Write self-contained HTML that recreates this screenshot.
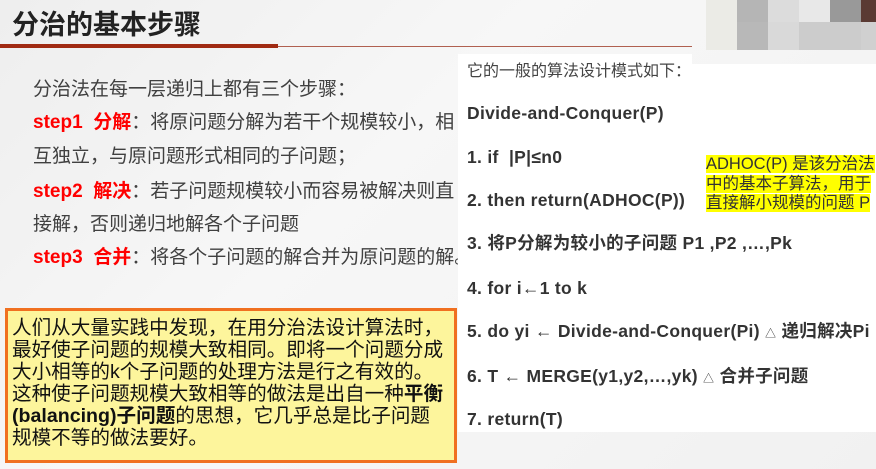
<!DOCTYPE html>
<html><head><meta charset="utf-8"><style>
body{margin:0;width:876px;height:469px;overflow:hidden;position:relative;background:linear-gradient(135deg,#eeeeee,#f7f7f7 40%,#f1f1f1);font-family:"Liberation Sans","Noto Sans CJK SC",sans-serif;}
.a{position:absolute;white-space:nowrap;}
.sq{position:absolute;width:31px;height:22px;}
.l{position:absolute;left:33px;font-size:19px;color:#404040;white-space:nowrap;line-height:24px;}
.r{color:#f00;font-weight:bold;}
.c{position:absolute;left:467px;font-size:17.5px;letter-spacing:0.3px;font-weight:bold;color:#333;white-space:nowrap;line-height:22px;}
</style></head><body>
<div class="sq" style="left:706px;top:0;background:#ebebe6;height:50px"></div>
<div class="sq" style="left:737px;top:0;background:#b5b5b5"></div>
<div class="sq" style="left:768px;top:0;background:#dcdcdc"></div>
<div class="sq" style="left:799px;top:0;background:#e8e8e8"></div>
<div class="sq" style="left:830px;top:0;background:#999"></div>
<div class="sq" style="left:861px;top:0;background:#5a3a33"></div>
<div class="sq" style="left:737px;top:22px;background:#b8b8b8;height:28px"></div>
<div class="sq" style="left:768px;top:22px;background:#d9d9d9;height:28px"></div>
<div class="sq" style="left:799px;top:22px;background:#cccccc;height:28px"></div>
<div class="sq" style="left:830px;top:22px;background:#cccccc;height:28px"></div>
<div class="sq" style="left:861px;top:22px;background:#d0d0d0;height:28px"></div>
<div class="a" style="left:12px;top:8px;font-size:27px;font-weight:bold;color:#222;line-height:34px">分治的基本步骤</div>
<div class="a" style="left:0;top:44px;width:278px;height:4px;background:#a02a12"></div>
<div class="a" style="left:278px;top:46px;width:414px;height:1px;background:#b06050"></div>
<div class="l" style="top:78px">分治法在每一层递归上都有三个步骤：</div>
<div class="l" style="top:111px"><span class="r">step1&nbsp; 分解</span>：将原问题分解为若干个规模较小，相</div>
<div class="l" style="top:145px">互独立，与原问题形式相同的子问题；</div>
<div class="l" style="top:180px"><span class="r">step2&nbsp; 解决</span>：若子问题规模较小而容易被解决则直</div>
<div class="l" style="top:213px">接解，否则递归地解各个子问题</div>
<div class="l" style="top:246px"><span class="r">step3&nbsp; 合并</span>：将各个子问题的解合并为原问题的解。</div>
<div class="a" style="left:5px;top:308px;width:446px;height:149px;border:3px solid #f07020;background:#fdf59c;"></div>
<div class="a" style="left:12px;top:317px;font-size:19.6px;line-height:22px;color:#111">人们从大量实践中发现，在用分治法设计算法时，<br>最好使子问题的规模大致相同。即将一个问题分成<br>大小相等的k个子问题的处理方法是行之有效的。<br>这种使子问题规模大致相等的做法是出自一种<b>平衡</b><br><b>(balancing)子问题</b>的思想，它几乎总是比子问题<br>规模不等的做法要好。</div>
<div class="a" style="left:458px;top:54px;width:234px;height:12px;background:#fff"></div>
<div class="a" style="left:458px;top:64px;width:418px;height:368px;background:#fff"></div>
<div class="a" style="left:467px;top:61px;font-size:16px;color:#444;line-height:22px">它的一般的算法设计模式如下：</div>
<div class="c" style="top:102px">Divide-and-Conquer(P)</div>
<div class="c" style="top:146px">1. if &nbsp;|P|≤n0</div>
<div class="c" style="top:189px">2. then return(ADHOC(P))</div>
<div class="c" style="top:232px">3. 将P分解为较小的子问题 P1 ,P2 ,…,Pk</div>
<div class="c" style="top:277px">4. for i←1 to k</div>
<div class="c" style="top:320px">5. do yi ← Divide-and-Conquer(Pi) <span style="font-weight:normal;font-size:11px">△</span> 递归解决Pi</div>
<div class="c" style="top:365px">6. T ← MERGE(y1,y2,…,yk) <span style="font-weight:normal;font-size:11px">△</span> 合并子问题</div>
<div class="c" style="top:408px">7. return(T)</div>
<div class="a" style="left:706px;top:155px;font-size:16.5px;line-height:19.5px;color:#333"><span style="background:#ffff00">ADHOC(P) 是该分治法</span><br><span style="background:#ffff00">中的基本子算法，用于</span><br><span style="background:#ffff00">直接解小规模的问题 P</span></div>
</body></html>
